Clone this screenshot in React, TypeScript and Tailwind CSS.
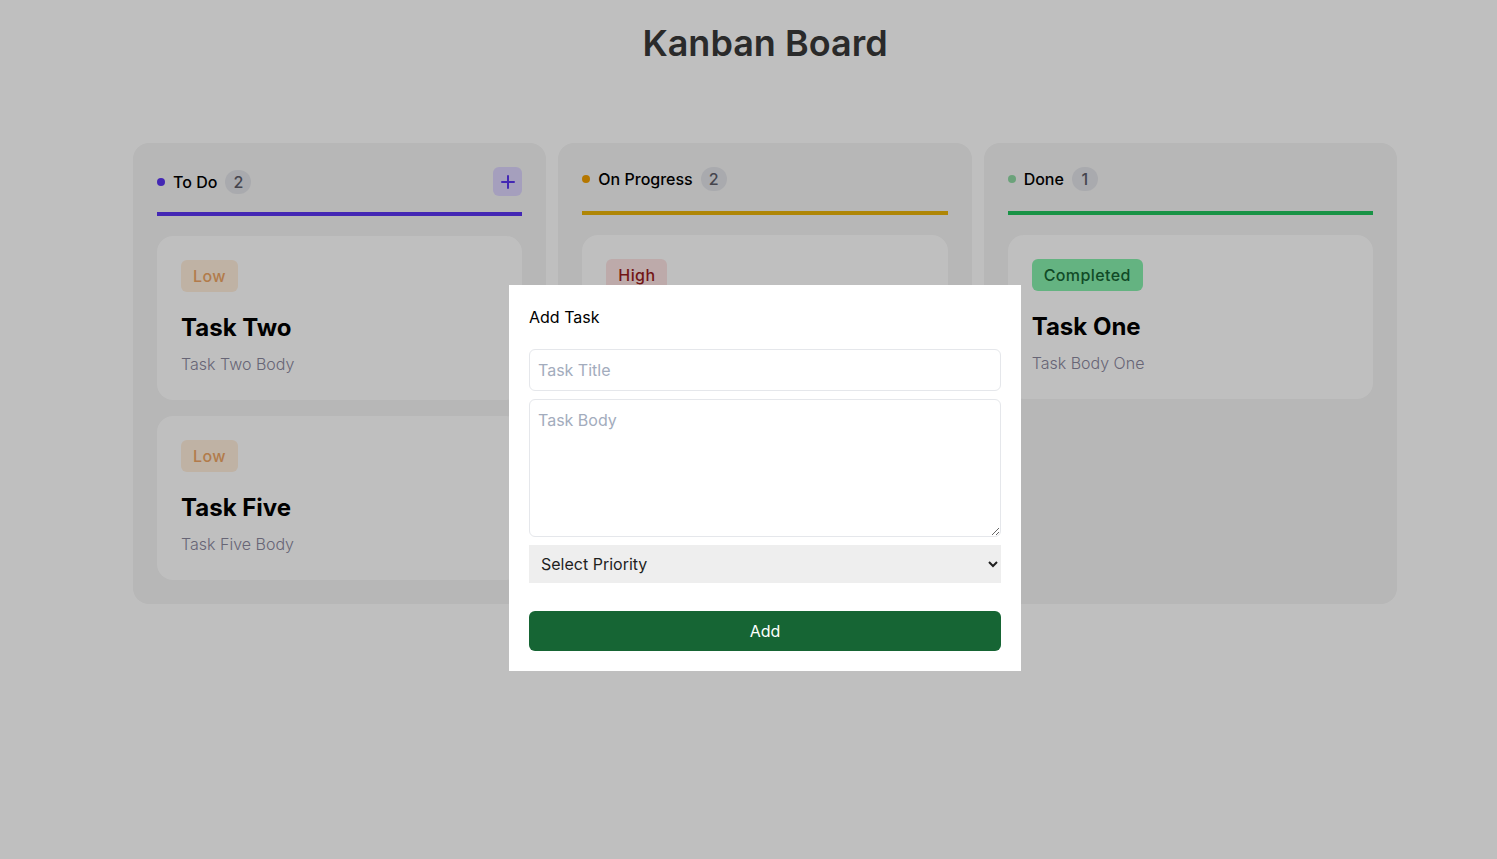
import React from "react";

type Task = { badge: string; badgeCls: string; title: string; body: string };

const font = { fontFamily: "Inter, 'Noto Sans', sans-serif" };

function Card({ t }: { t: Task }) {
  return (
    <div className="rounded-2xl bg-white p-6">
      <span className={`inline-block rounded-md px-3 py-1 text-base font-medium leading-6 tracking-wide ${t.badgeCls}`}>{t.badge}</span>
      <div className="mt-5 text-2xl font-bold leading-8 text-black">{t.title}</div>
      <div className="mt-2 text-base font-light leading-6 text-[#8a879d]">{t.body}</div>
    </div>
  );
}

function Count({ n }: { n: number }) {
  return (
    <span className="flex h-6 w-[26px] items-center justify-center rounded-full bg-[#e2e3e8] text-base font-medium text-[#5c5c68]">
      {n}
    </span>
  );
}

export default function App() {
  const low = "bg-[#ffeedb] text-[#eea565]";
  const todo: Task[] = [
    { badge: "Low", badgeCls: low, title: "Task Two", body: "Task Two Body" },
    { badge: "Low", badgeCls: low, title: "Task Five", body: "Task Five Body" },
  ];
  const prog: Task[] = [
    { badge: "High", badgeCls: "bg-[#fde3e3] text-[#991b1b]", title: "Task Three", body: "Task Three Body" },
    { badge: "High", badgeCls: "bg-[#fde3e3] text-[#991b1b]", title: "Task Four", body: "Task Four Body" },
  ];
  const done: Task[] = [
    { badge: "Completed", badgeCls: "bg-[#86efac] text-[#166534]", title: "Task One", body: "Task Body One" },
  ];

  return (
    <div className="relative min-h-[859px] w-full bg-white pl-[33px]" style={font}>
      <div className="flex flex-col items-center pt-[23px]">
        <h1 className="h-10 text-4xl font-semibold leading-10 text-[#383838]">Kanban Board</h1>
        <div className="mt-[80px] grid w-[1264px] grid-cols-3 gap-3">
          {/* To Do */}
          <div className="rounded-2xl bg-[#f4f4f4] px-6 pb-6 pt-6">
            <div className="mb-4 flex h-[29px] items-center justify-between">
              <div className="flex items-center gap-2">
                <span className="h-2 w-2 rounded-full bg-[#5a35f0]" />
                <span className="text-base font-medium text-black">To Do</span>
                <Count n={2} />
              </div>
              <button className="flex h-[29px] w-[29px] items-center justify-center rounded-md bg-[#dcd5fd]">
                <svg width="14" height="14" viewBox="0 0 14 14">
                  <path d="M7 1v12M1 7h12" stroke="#5a35f0" strokeWidth="2" strokeLinecap="round" />
                </svg>
              </button>
            </div>
            <div className="h-1 w-full bg-[#5a35f0]" />
            <div className="mt-5 flex flex-col gap-4">
              {todo.map((t) => (
                <Card key={t.title} t={t} />
              ))}
            </div>
          </div>
          {/* On Progress */}
          <div className="rounded-2xl bg-[#f4f4f4] px-6 pb-6 pt-6">
            <div className="mb-5 flex h-6 items-center gap-2">
              <span className="h-2 w-2 rounded-full bg-[#f29f00]" />
              <span className="text-base font-medium text-black">On Progress</span>
              <Count n={2} />
            </div>
            <div className="h-1 w-full bg-[#eab308]" />
            <div className="mt-5 flex flex-col gap-4">
              {prog.map((t) => (
                <Card key={t.title} t={t} />
              ))}
            </div>
          </div>
          {/* Done */}
          <div className="rounded-2xl bg-[#f4f4f4] px-6 pb-6 pt-6">
            <div className="mb-5 flex h-6 items-center gap-2">
              <span className="h-2 w-2 rounded-full bg-[#8fd9a3]" />
              <span className="text-base font-medium text-black">Done</span>
              <Count n={1} />
            </div>
            <div className="h-1 w-full bg-[#22c55e]" />
            <div className="mt-5 flex flex-col gap-4">
              {done.map((t) => (
                <Card key={t.title} t={t} />
              ))}
            </div>
          </div>
        </div>
      </div>

      {/* Modal overlay */}
      <div className="fixed inset-0 flex items-start justify-center bg-black/25 pl-[33px] pt-[285px]">
        <div className="w-[512px] bg-white p-5">
          <div className="text-base leading-6 text-black">Add Task</div>
          <input
            autoFocus
            placeholder="Task Title"
            className="mt-5 block w-full rounded-md border border-[#e5e7eb] px-2 py-2 text-base leading-6 text-black placeholder:text-[#a3acbd] focus:outline-none"
          />
          <textarea
            placeholder="Task Body"
            className="mt-2 block h-[138px] w-full rounded-md border border-[#e5e7eb] px-2 py-2 text-base leading-6 text-black placeholder:text-[#a3acbd] focus:outline-none"
          />
          <select
            defaultValue=""
            className="mt-2 block h-[38px] w-full bg-[#eeeeee] px-2 text-base text-[#1f1f1f] outline-none"
          >
            <option value="">Select Priority</option>
            <option value="low">Low</option>
            <option value="high">High</option>
            <option value="completed">Completed</option>
          </select>
          <button className="mt-7 block h-10 w-full rounded-md bg-[#166534] text-base text-white">Add</button>
        </div>
      </div>
    </div>
  );
}
